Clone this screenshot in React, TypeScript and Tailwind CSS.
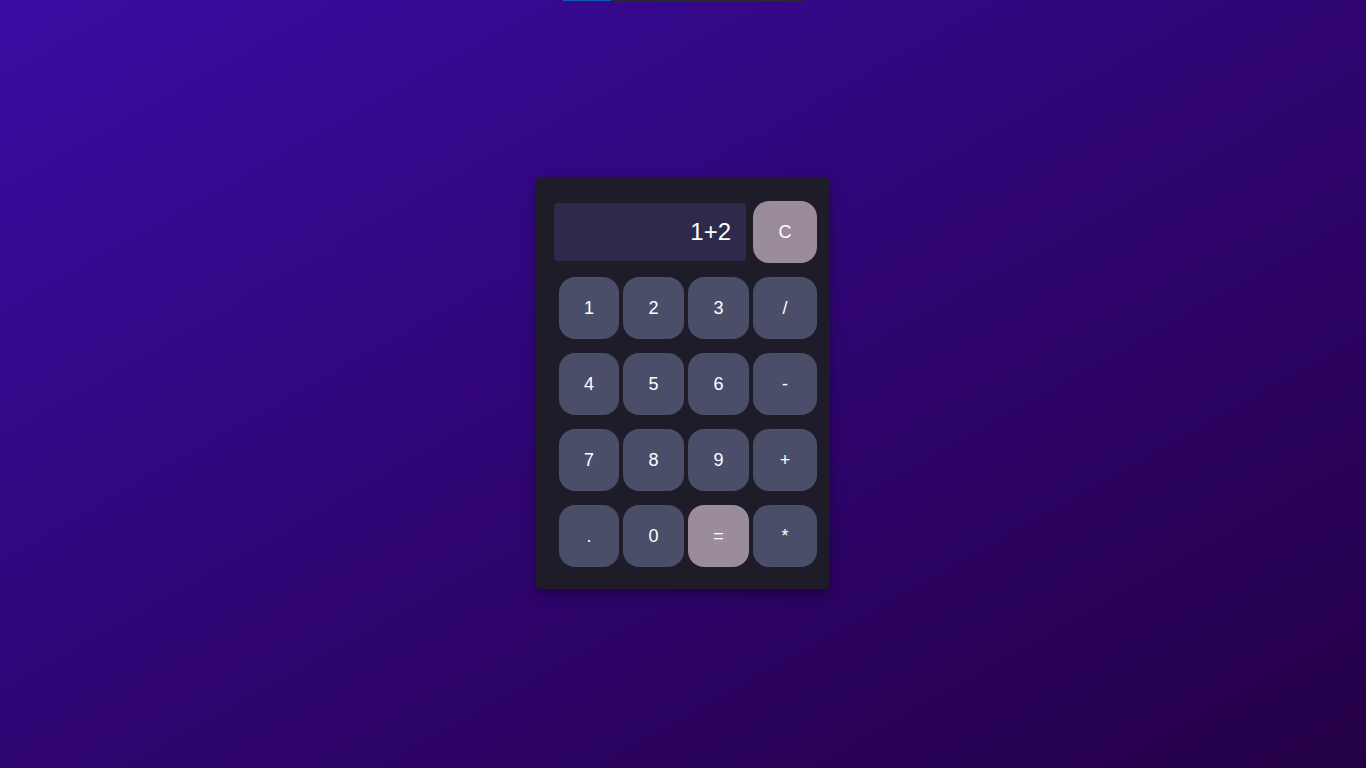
import React from "react";

const keys: { label: string; accent?: boolean }[] = [
  { label: "1" }, { label: "2" }, { label: "3" }, { label: "/" },
  { label: "4" }, { label: "5" }, { label: "6" }, { label: "-" },
  { label: "7" }, { label: "8" }, { label: "9" }, { label: "+" },
  { label: "." }, { label: "0" }, { label: "=", accent: true }, { label: "*" },
];

export default function App() {
  return (
    <div
      className="relative w-full h-[768px] overflow-hidden bg-gradient-to-br from-[#3a0ca3] to-[#240046] flex items-start justify-center"
      style={{ fontFamily: '"Liberation Sans", Arial, sans-serif' }}
    >
      <div className="absolute top-0 left-[563px] w-[240px] h-[1px] bg-[#2a2a2a] flex">
        <div className="w-[48px] h-full bg-[#0a5fa8]" />
      </div>
      <div className="mt-[178px] ml-[-1px] w-[293px] h-[411px] rounded-[4px] bg-[#1d1c28] shadow-[0_4px_12px_rgba(0,0,0,0.35)] pt-[23px] pl-[23px]">
        <div className="grid grid-cols-[60px_61px_61px_64px] gap-x-[4px] gap-y-[14px]">
          <div className="col-span-3 self-center ml-[-5px] w-[192px] h-[58px] rounded-[4px] bg-[#2e2a4b] flex items-center justify-end pr-[15px] text-white text-[24px]">
            1+2
          </div>
          <button className="h-[62px] rounded-[16px] bg-[#9a8c98] text-white text-[18px] flex items-center justify-center">
            C
          </button>
          {keys.map((k) => (
            <button
              key={k.label}
              className={
                "h-[62px] rounded-[16px] text-white text-[18px] flex items-center justify-center " +
                (k.accent ? "bg-[#9a8c98]" : "bg-[#4a4e69]")
              }
            >
              {k.label}
            </button>
          ))}
        </div>
      </div>
    </div>
  );
}
